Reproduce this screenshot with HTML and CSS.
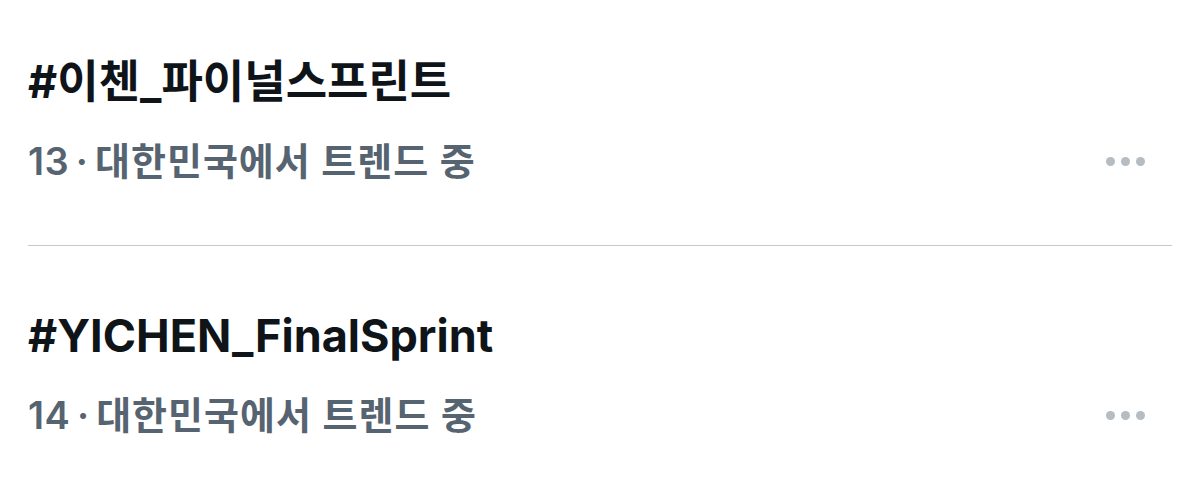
FILE: index.html
```html
<!DOCTYPE html>
<html lang="ko">
<head>
    <meta charset="UTF-8">
    <meta name="viewport" content="width=device-width, initial-scale=1.0">
    <title>Trends</title>
    <link rel="stylesheet" href="styles.css">
</head>
<body>
    <div class="trend-list">
        <div class="trend">
            <div class="trend-title">#이첸_파이널스프린트</div>
            <div class="trend-meta">
                <span><span class="rank">13 · </span>대한민국에서 트렌드 중</span>
                <span class="more"><i></i><i></i><i></i></span>
            </div>
        </div>
        <div class="trend">
            <div class="trend-title">#YICHEN_FinalSprint</div>
            <div class="trend-meta">
                <span><span class="rank">14 · </span>대한민국에서 트렌드 중</span>
                <span class="more"><i></i><i></i><i></i></span>
            </div>
        </div>
    </div>
</body>
</html>
```

FILE: styles.css
```css
body {
    margin: 0;
    background: #fff;
    font-family: Inter, "Noto Sans CJK KR", sans-serif;
}
.trend-list {
    padding: 0 28px;
}
.trend {
    padding: 63px 0 61px;
    border-bottom: 1px solid #c9c9c9;
}
.trend:first-child {
    padding-top: 55px;
}
.trend:last-child {
    border-bottom: none;
}
.trend-title {
    font-size: 45px;
    line-height: 54px;
    font-weight: 700;
    color: #0f1419;
}
.trend-meta {
    display: flex;
    align-items: center;
    justify-content: space-between;
    margin-top: 29px;
    font-size: 38px;
    line-height: 46px;
    font-weight: 600;
    letter-spacing: 1px;
    color: #566370;
}
.rank {
    letter-spacing: 0.5px;
    word-spacing: -3.5px;
}
.more {
    display: flex;
    gap: 6px;
    margin-right: 27px;
}
.more i {
    width: 9px;
    height: 9px;
    border-radius: 50%;
    background: #b5bcc2;
}
```
